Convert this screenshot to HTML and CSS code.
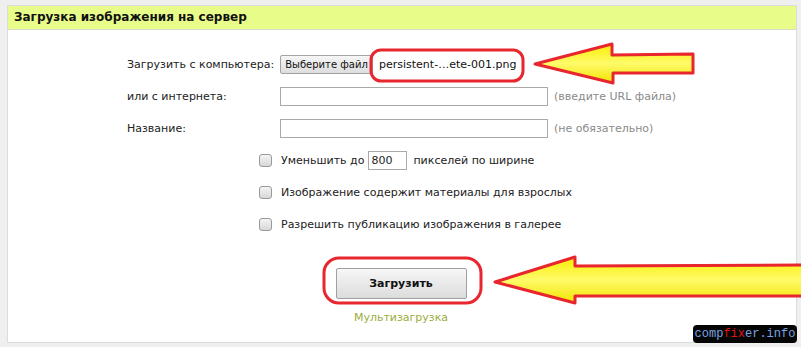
FILE: index.html
```html
<!DOCTYPE html>
<html lang="ru">
<head>
    <meta charset="UTF-8">
    <title>Загрузка изображения на сервер</title>
    <link rel="stylesheet" href="styles.css">
</head>
<body>
    <div class="panel">
        <div class="panel-head">Загрузка изображения на сервер</div>
        <form class="upload-form">
            <div class="row">
                <label class="label">Загрузить с компьютера:</label>
                <span class="file-btn">Выберите файл</span>
                <span class="file-name">persistent-…ete-001.png</span>
            </div>
            <div class="row">
                <label class="label">или с интернета:</label>
                <input type="text" class="text-input">
                <span class="hint">(введите URL файла)</span>
            </div>
            <div class="row">
                <label class="label">Название:</label>
                <input type="text" class="text-input">
                <span class="hint">(не обязательно)</span>
            </div>
            <div class="row check-row">
                <span class="checkbox"></span>
                <span>Уменьшить до</span>
                <input type="text" class="small-input" value="800">
                <span>пикселей по ширине</span>
            </div>
            <div class="row check-row">
                <span class="checkbox"></span>
                <span>Изображение содержит материалы для взрослых</span>
            </div>
            <div class="row check-row">
                <span class="checkbox"></span>
                <span>Разрешить публикацию изображения в галерее</span>
            </div>
            <div class="submit-area">
                <button type="button" class="submit-btn">Загрузить</button>
                <a class="multi-link">Мультизагрузка</a>
            </div>
        </form>
    </div>

    <!-- annotations drawn over the screenshot -->
    <svg class="marks" width="801" height="347" viewBox="0 0 801 347">
        <defs>
            <linearGradient id="yel" x1="0" y1="0" x2="0" y2="1">
                <stop offset="0" stop-color="#f8ee00"/>
                <stop offset="0.5" stop-color="#fffb6a"/>
                <stop offset="1" stop-color="#f2e400"/>
            </linearGradient>
        </defs>
        <rect x="371" y="50" width="152" height="31" rx="10" fill="none" stroke="#e8262e" stroke-width="3"/>
        <rect x="324" y="258" width="157" height="45" rx="15" fill="none" stroke="#e8262e" stroke-width="3"/>
        <polygon points="535,64 612,44 612,55 693,54 693,73 613,73 613,83" fill="url(#yel)" stroke="#e8262e" stroke-width="3" stroke-linejoin="round"/>
        <polygon points="495,282 575,257 575,266 806,265 806,296 575,296 575,303" fill="url(#yel)" stroke="#e8262e" stroke-width="3" stroke-linejoin="round"/>
    </svg>

    <div class="watermark">comp<span class="wm-red">fix</span>er.info</div>
</body>
</html>
```

FILE: styles.css
```css
body {
    margin: 0;
    padding: 5px 4px 0 7px;
    background-color: #efefef;
    font-family: "DejaVu Sans", Verdana, sans-serif;
    font-size: 11px;
    color: #222;
}
.panel {
    width: 788px;
    height: 336px;
    background-color: #fff;
    border: 1px solid #dcdcdc;
}
.panel-head {
    height: 23px;
    line-height: 23px;
    padding-left: 6px;
    background-color: #e8fc8a;
    border-bottom: 1px solid #d8dcc8;
    font-size: 12px;
    font-weight: bold;
    color: #111;
}
.upload-form {
    padding: 18px 0 0 119px;
}
.row {
    display: flex;
    align-items: center;
    height: 32px;
    gap: 6px;
    white-space: nowrap;
}
.label {
    flex: none;
    width: 147px;
}
.file-btn {
    box-sizing: border-box;
    flex: none;
    width: 93px;
    height: 19px;
    line-height: 17px;
    text-align: center;
    font-size: 10px;
    border: 1px solid #a3a3a3;
    border-radius: 2px;
    background: linear-gradient(#f6f6f6, #dedede);
    color: #111;
}
.file-name {
    color: #111;
}
.text-input {
    box-sizing: border-box;
    flex: none;
    width: 268px;
    height: 19px;
    margin: 0;
    border: 1px solid #a9a9a9;
    font: inherit;
}
.hint {
    color: #8a8a8a;
}
.check-row {
    padding-left: 132px;
    gap: 0;
}
.checkbox {
    box-sizing: border-box;
    flex: none;
    width: 13px;
    height: 13px;
    margin-right: 9px;
    border: 1px solid #9a9a9a;
    border-radius: 3px;
    background: linear-gradient(#f4f4f4, #d8d8d8);
}
.small-input {
    box-sizing: border-box;
    flex: none;
    width: 39px;
    height: 19px;
    margin: 0 6px 0 4px;
    padding: 0 2px;
    border: 1px solid #a9a9a9;
    font: inherit;
    color: #222;
}
.submit-area {
    display: flex;
    flex-direction: column;
    align-items: center;
    width: 548px;
    margin-top: 28px;
}
.submit-btn {
    width: 131px;
    height: 31px;
    border: 1px solid #a0a0a0;
    border-radius: 2px;
    background: linear-gradient(#f7f7f7, #dcdcdc);
    font-family: inherit;
    font-size: 11px;
    font-weight: bold;
    color: #111;
}
.multi-link {
    margin-top: 12px;
    color: #9aae3a;
}
.marks {
    position: absolute;
    left: 0;
    top: 0;
    pointer-events: none;
}
.watermark {
    position: absolute;
    left: 693px;
    top: 325px;
    width: 104px;
    height: 18px;
    line-height: 18px;
    text-align: center;
    background-color: #050505;
    border-radius: 4px;
    font-family: "Liberation Mono", monospace;
    font-size: 12px;
    color: #7aa2e0;
}
.wm-red {
    color: #e01414;
}
```
